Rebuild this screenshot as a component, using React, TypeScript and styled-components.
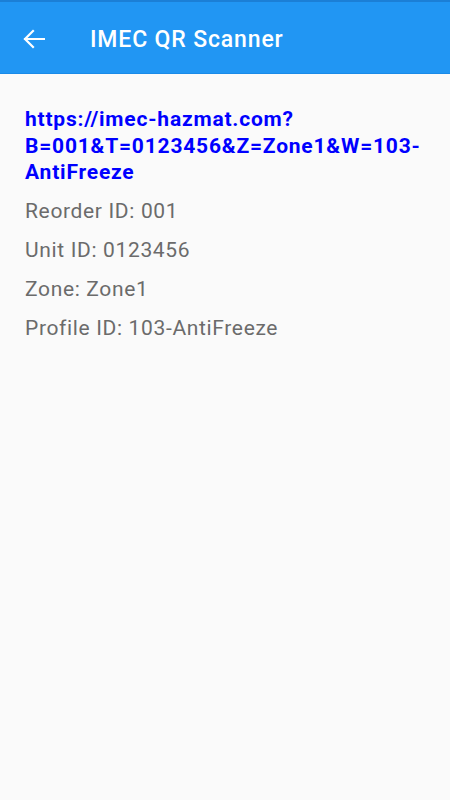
import React from 'react';
import styled, { createGlobalStyle } from 'styled-components';

const GlobalStyle = createGlobalStyle`
  html, body {
    margin: 0;
    padding: 0;
    background-color: #fafafa;
    font-family: Roboto, 'Liberation Sans', sans-serif;
  }
`;

const Page = styled.div`
  width: 450px;
  min-height: 800px;
  background-color: #fafafa;
  display: flex;
  flex-direction: column;
`;

const StatusStrip = styled.div`
  height: 2px;
  background-color: #1b7fd6;
`;

const Toolbar = styled.header`
  height: 72px;
  box-sizing: border-box;
  padding: 3px 0 0 23px;
  display: flex;
  align-items: center;
  gap: 45px;
  background-color: #2196f3;
  border-bottom: 1px solid #1a8ae8;
`;

const BackButton = styled.button`
  border: none;
  background: none;
  padding: 0;
  width: 22px;
  height: 20px;
  display: flex;
  cursor: pointer;
`;

const Title = styled.h1`
  margin: 0;
  color: #ffffff;
  font-size: 23px;
  font-weight: 500;
  letter-spacing: 0.85px;
`;

const Content = styled.main`
  padding: 32px 25px 0 25px;
  display: flex;
  flex-direction: column;
`;

const Link = styled.a`
  color: #0000ff;
  font-size: 21px;
  font-weight: 700;
  line-height: 26.5px;
  letter-spacing: 0.8px;
  text-decoration: none;
  word-break: break-word;
  margin-bottom: 6px;
`;

const Field = styled.p`
  margin: 0;
  color: #6b6b6b;
  font-size: 21px;
  line-height: 39px;
  letter-spacing: 0.65px;
`;

const fields = [
  { label: 'Reorder ID', value: '001' },
  { label: 'Unit ID', value: '0123456' },
  { label: 'Zone', value: 'Zone1' },
  { label: 'Profile ID', value: '103-AntiFreeze' },
];

const App: React.FC = () => {
  const url = 'https://imec-hazmat.com?B=001&T=0123456&Z=Zone1&W=103-AntiFreeze';

  return (
    <Page>
      <GlobalStyle />
      <StatusStrip />
      <Toolbar>
        <BackButton aria-label="Back">
          <svg width="22" height="20" viewBox="0 0 22 20" fill="none">
            <path
              d="M2 10H21M2 10L10 2M2 10L10 18"
              stroke="#ffffff"
              strokeWidth="2.2"
              strokeLinecap="square"
            />
          </svg>
        </BackButton>
        <Title>IMEC QR Scanner</Title>
      </Toolbar>
      <Content>
        <Link href={url}>
          https://imec-hazmat.com?
          <br />
          B=001&amp;T=0123456&amp;Z=Zone1&amp;W=103-
          <br />
          AntiFreeze
        </Link>
        {fields.map((f) => (
          <Field key={f.label}>
            {f.label}: {f.value}
          </Field>
        ))}
      </Content>
    </Page>
  );
};

export default App;
